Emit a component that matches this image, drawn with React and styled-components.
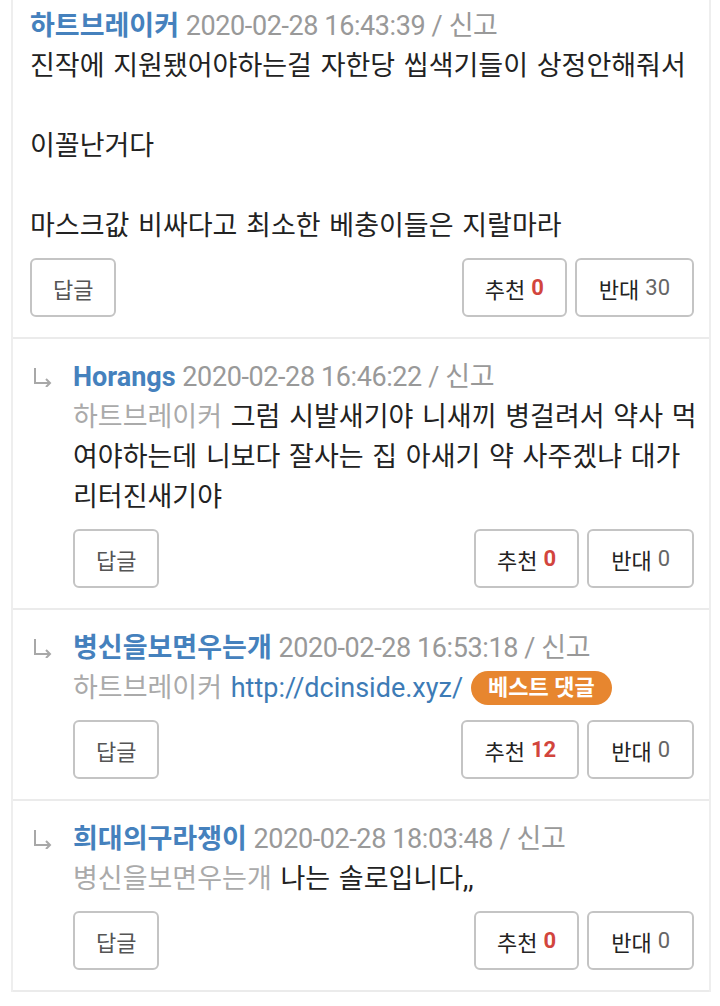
import React from "react";
import styled, { createGlobalStyle } from "styled-components";

const GlobalStyle = createGlobalStyle`
  html, body {
    margin: 0;
    padding: 0;
    background: #fff;
  }
  body {
    font-family: Roboto, "Noto Sans CJK KR", sans-serif;
    -webkit-font-smoothing: antialiased;
  }
`;

const Card = styled.ul`
  list-style: none;
  margin: 0 0 0 11px;
  padding: 0;
  width: 700px;
  box-sizing: border-box;
  border-left: 2px solid #eeeeee;
  border-right: 2px solid #eeeeee;
`;

const Item = styled.li`
  display: flex;
  padding: 18px 15px 20px ${({ $reply }) => ($reply ? "20px" : "17px")};
  border-bottom: 2px solid #ebebeb;

  &:first-child {
    padding-top: 6px;
  }
`;

const Arrow = styled.span`
  flex: 0 0 40px;
  height: 40px;
  display: flex;
  align-items: center;
  color: #a8a8a8;
`;

const Body = styled.div`
  flex: 1;
  min-width: 0;
  font-size: 27px;
  line-height: 40px;
  color: #222;
`;

const Head = styled.div`
  white-space: nowrap;
`;

const Name = styled.span`
  font-weight: 700;
  color: #4581bd;
`;

const Meta = styled.span`
  color: #999;
  letter-spacing: -0.4px;
`;

const Text = styled.div`
  margin-right: -8px;
  white-space: pre-wrap;
  word-break: break-all;
  word-spacing: 2px;
`;

const Target = styled.span`
  color: #aaa;
`;

const Link = styled.a`
  color: #3d7bb6;
  text-decoration: none;
`;

const Badge = styled.span`
  display: inline-block;
  margin-left: 8px;
  padding: 0 17px;
  height: 34px;
  line-height: 34px;
  border-radius: 17px;
  background: #e7862f;
  color: #fff;
  font-size: 22px;
  font-weight: 700;
  word-spacing: 0;
  vertical-align: 2px;
`;

const Actions = styled.div`
  display: flex;
  gap: 8px;
  margin-top: 12px;
`;

const Spacer = styled.div`
  flex: 1;
`;

const Button = styled.button`
  height: 59px;
  padding: 0 ${({ $pad }) => $pad || 21}px;
  border: 2px solid #c4c4c4;
  border-radius: 6px;
  background: #fff;
  font-family: Roboto, "Noto Sans CJK KR", sans-serif;
  font-size: 22px;
  color: ${({ $muted }) => ($muted ? "#555" : "#222")};
  display: flex;
  align-items: center;
  gap: 6px;
`;

const Count = styled.span`
  color: ${({ $up }) => ($up ? "#d2453d" : "#666")};
  font-weight: ${({ $up }) => ($up ? 700 : 400)};
`;

const ReplyArrow = () => (
  <svg width="20" height="20" viewBox="0 0 20 20" fill="none" stroke="currentColor" strokeWidth="2">
    <path d="M2 1v15h15" />
    <path d="M13 12l4 4-4 4" />
  </svg>
);

const comments = [
  {
    name: "하트브레이커",
    date: "2020-02-28 16:43:39",
    body: "진작에 지원됐어야하는걸 자한당 씹색기들이 상정안해줘서\n\n이꼴난거다\n\n마스크값 비싸다고 최소한 베충이들은 지랄마라",
    up: 0,
    down: 30,
  },
  {
    reply: true,
    name: "Horangs",
    date: "2020-02-28 16:46:22",
    target: "하트브레이커",
    body: "그럼 시발새기야 니새끼 병걸려서 약사 먹여야하는데 니보다 잘사는 집 아새기 약 사주겠냐 대가리터진새기야",
    up: 0,
    down: 0,
  },
  {
    reply: true,
    name: "병신을보면우는개",
    date: "2020-02-28 16:53:18",
    target: "하트브레이커",
    link: "http://dcinside.xyz/",
    best: true,
    up: 12,
    down: 0,
  },
  {
    reply: true,
    name: "희대의구라쟁이",
    date: "2020-02-28 18:03:48",
    target: "병신을보면우는개",
    body: "나는 솔로입니다,,",
    up: 0,
    down: 0,
  },
];

const Comment = ({ c }) => (
  <Item $reply={c.reply}>
    {c.reply && (
      <Arrow>
        <ReplyArrow />
      </Arrow>
    )}
    <Body>
      <Head>
        <Name>{c.name}</Name> <Meta>{c.date} / 신고</Meta>
      </Head>
      <Text>
        {c.target && <Target>{c.target} </Target>}
        {c.link && <Link href="#">{c.link}</Link>}
        {c.best && <Badge>베스트 댓글</Badge>}
        {c.body}
      </Text>
      <Actions>
        <Button $muted>답글</Button>
        <Spacer />
        <Button>
          추천 <Count $up>{c.up}</Count>
        </Button>
        <Button $pad={22}>
          반대 <Count>{c.down}</Count>
        </Button>
      </Actions>
    </Body>
  </Item>
);

export default function App() {
  return (
    <>
      <GlobalStyle />
      <Card>
        {comments.map((c, i) => (
          <Comment key={i} c={c} />
        ))}
      </Card>
    </>
  );
}
